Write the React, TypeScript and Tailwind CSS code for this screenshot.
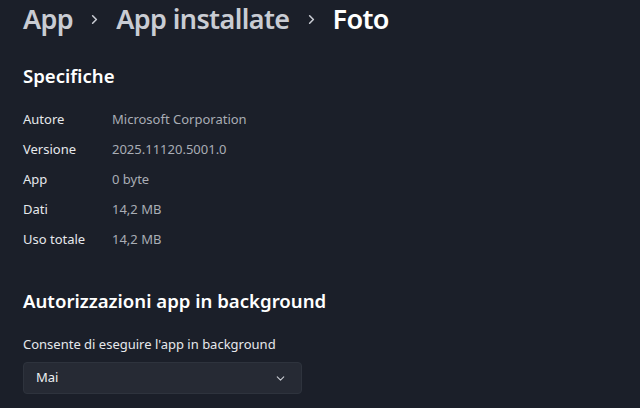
import { ChevronRight, ChevronDown } from 'lucide-react';

const specs = [
  ['Autore', 'Microsoft Corporation'],
  ['Versione', '2025.11120.5001.0'],
  ['App', '0 byte'],
  ['Dati', '14,2 MB'],
  ['Uso totale', '14,2 MB'],
];

export default function App() {
  return (
    <div
      className="w-[640px] h-[408px] overflow-hidden bg-[#1b1f29] pl-[23px] text-[#e4e6ea]"
      style={{ fontFamily: '"Noto Sans", "Open Sans", sans-serif' }}
    >
      <div className="flex items-center h-[40px] -mt-[1px] text-[27px] font-semibold tracking-[-0.6px]">
        <span className="text-[#c9ccd3]">App</span>
        <ChevronRight className="mx-[14px] w-[15px] h-[15px] text-[#c9ccd3]" strokeWidth={2.5} />
        <span className="text-[#c9ccd3]">App installate</span>
        <ChevronRight className="mx-[14px] w-[15px] h-[15px] text-[#c9ccd3]" strokeWidth={2.5} />
        <span className="text-white">Foto</span>
      </div>

      <h2 className="mt-[25px] text-[18.6px] font-semibold text-white leading-[24px]">Specifiche</h2>

      <div className="mt-[17px] flex flex-col">
        {specs.map(([k, v]) => (
          <div key={k} className="flex h-[30px] items-center text-[13px]">
            <span className="w-[89px] text-[#e6e8ec]">{k}</span>
            <span className="text-[#a9adb5]">{v}</span>
          </div>
        ))}
      </div>

      <h2 className="mt-[34px] text-[18.6px] font-semibold text-white leading-[24px]">
        Autorizzazioni app in background
      </h2>

      <div className="mt-[22px] text-[13px] text-[#e6e8ec] leading-[18px]">
        Consente di eseguire l'app in background
      </div>

      <div className="mt-[9px] w-[279px] h-[32px] rounded-[4px] bg-[#262a34] border border-[#2e333d] flex items-center justify-between pl-[12px] pr-[14px]">
        <span className="text-[13px] text-[#eceef1]">Mai</span>
        <ChevronDown className="w-[13px] h-[13px] text-[#c9ccd3]" strokeWidth={2} />
      </div>
    </div>
  );
}
